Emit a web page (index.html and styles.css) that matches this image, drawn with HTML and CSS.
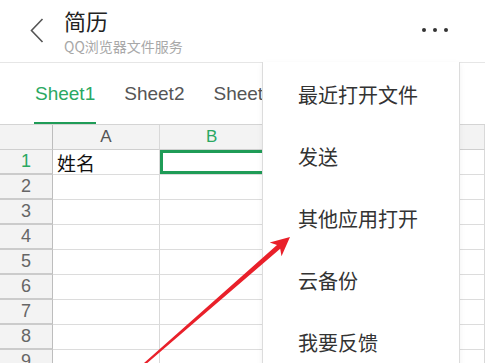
FILE: index.html
```html
<!DOCTYPE html>
<html lang="zh-CN">

<head>
  <meta charset="UTF-8">
  <meta name="viewport" content="width=device-width, initial-scale=1.0">
  <title>简历</title>

  <link rel="stylesheet" href="styles.css">
</head>

<body>
  <div id="app">
    <div class="topBar">
      <div class="backBtn">
        <svg width="14" height="26" viewBox="0 0 14 26">
          <polyline points="12.5,1 1.5,12.5 12.5,24" fill="none" stroke="#555" stroke-width="1.6" />
        </svg>
      </div>
      <div class="titleBlock">
        <div class="title">简历</div>
        <div class="subTitle">QQ浏览器文件服务</div>
      </div>
      <div class="moreBtn">
        <span class="dot"></span><span class="dot"></span><span class="dot"></span>
      </div>
    </div>

    <div class="sheetTabs">
      <div class="tab active">Sheet1</div>
      <div class="tab">Sheet2</div>
      <div class="tab">Sheet3</div>
    </div>

    <div class="grid">
      <div class="cell corner"></div>
      <div class="cell colHead">A</div>
      <div class="cell colHead current">B</div>
      <div class="cell colHead">C</div>

      <div class="cell rowHead current">1</div>
      <div class="cell text">姓名</div>
      <div class="cell selected"></div>
      <div class="cell"></div>

      <div class="cell rowHead">2</div><div class="cell"></div><div class="cell"></div><div class="cell"></div>
      <div class="cell rowHead">3</div><div class="cell"></div><div class="cell"></div><div class="cell"></div>
      <div class="cell rowHead">4</div><div class="cell"></div><div class="cell"></div><div class="cell"></div>
      <div class="cell rowHead">5</div><div class="cell"></div><div class="cell"></div><div class="cell"></div>
      <div class="cell rowHead">6</div><div class="cell"></div><div class="cell"></div><div class="cell"></div>
      <div class="cell rowHead">7</div><div class="cell"></div><div class="cell"></div><div class="cell"></div>
      <div class="cell rowHead">8</div><div class="cell"></div><div class="cell"></div><div class="cell"></div>
      <div class="cell rowHead">9</div><div class="cell"></div><div class="cell"></div><div class="cell"></div>
    </div>

    <!-- dropdown from the "..." button -->
    <div class="menu">
      <div class="menuItem">最近打开文件</div>
      <div class="menuItem">发送</div>
      <div class="menuItem">其他应用打开</div>
      <div class="menuItem">云备份</div>
      <div class="menuItem">我要反馈</div>
    </div>

    <svg class="arrow" width="485" height="363" viewBox="0 0 485 363">
      <polygon fill="#e9202a"
        points="290,237 281.5,256.2 280.2,248.7 143.8,366 142.2,364.6 277,244.9 269.7,242.6" />
    </svg>
  </div>
</body>

</html>
```

FILE: styles.css
```css
* {
  box-sizing: border-box;
}

body {
  margin: 0px;
  background-color: #fff;
  font-family: "Liberation Sans", "Noto Sans CJK SC", sans-serif;
  color: #333;
}

#app {
  position: relative;
  width: 485px;
  height: 363px;
  overflow: hidden;
}

.topBar {
  display: flex;
  align-items: flex-start;
  height: 63px;
  border-bottom: 1px solid #e6e6e6;
}

.backBtn {
  margin: 18px 0px 0px 30px;
}

.titleBlock {
  margin: 6px 0px 0px 20px;
}

.title {
  font-family: "Noto Sans CJK SC", sans-serif;
  font-size: 22px;
  line-height: 28px;
  color: #222;
}

.subTitle {
  margin-top: 2px;
  font-family: "Noto Sans CJK SC", sans-serif;
  font-size: 14px;
  line-height: 20px;
  color: #a8a8a8;
}

.moreBtn {
  display: flex;
  gap: 7px;
  margin: 28px 0px 0px auto;
  padding-right: 37px;
}

.dot {
  width: 4px;
  height: 4px;
  border-radius: 50%;
  background-color: #333;
}

.sheetTabs {
  display: flex;
  gap: 27px;
  height: 61px;
  padding-left: 34px;
  overflow: hidden;
}

.tab {
  display: flex;
  align-items: center;
  padding: 0px 1px;
  font-size: 19px;
  color: #555;
  white-space: nowrap;
}

.tab.active {
  color: #2aa862;
  box-shadow: inset 0px -2px 0px #1f9c57;
}

.grid {
  display: grid;
  grid-template-columns: 53px 107px 150px 1fr;
  grid-auto-rows: 25px;
  border-top: 1px solid #d4d4d4;
}

.cell {
  border-right: 1px solid #d9d9d9;
  border-bottom: 1px solid #dcdcdc;
}

.corner,
.colHead {
  background-color: #f3f3f3;
  border-bottom-color: #cfcfcf;
}

.colHead {
  display: flex;
  align-items: center;
  justify-content: center;
  font-size: 17px;
  color: #555;
}

.colHead.current {
  color: #2aa862;
  justify-content: flex-start;
  padding-left: 46px;
}

.rowHead {
  display: flex;
  align-items: center;
  justify-content: center;
  background-color: #f3f3f3;
  border-right: 1px solid #bdbdbd;
  border-bottom: 2px solid #cbcbcb;
  font-size: 18px;
  color: #666;
}

.corner {
  border-right: 1px solid #bdbdbd;
}

.rowHead.current {
  color: #2aa862;
}

.text {
  display: flex;
  align-items: center;
  padding-left: 4px;
  font-family: "Noto Sans CJK SC", sans-serif;
  font-size: 19px;
  color: #111;
}

.selected {
  border-right: none;
  box-shadow: inset 0px 0px 0px 3px #1f9c57;
}

.menu {
  position: absolute;
  left: 262px;
  top: 62px;
  width: 198px;
  height: 320px;
  padding-top: 1px;
  background-color: #fff;
  border-left: 1px solid #dcdcdc;
  border-right: 1px solid #dcdcdc;
  box-shadow: 0px 2px 6px rgba(0, 0, 0, 0.06);
}

.menuItem {
  display: flex;
  align-items: center;
  height: 62px;
  padding-left: 35px;
  font-family: "Noto Sans CJK SC", sans-serif;
  font-size: 20px;
  color: #333;
}

.arrow {
  position: absolute;
  left: 0px;
  top: 0px;
}
```
